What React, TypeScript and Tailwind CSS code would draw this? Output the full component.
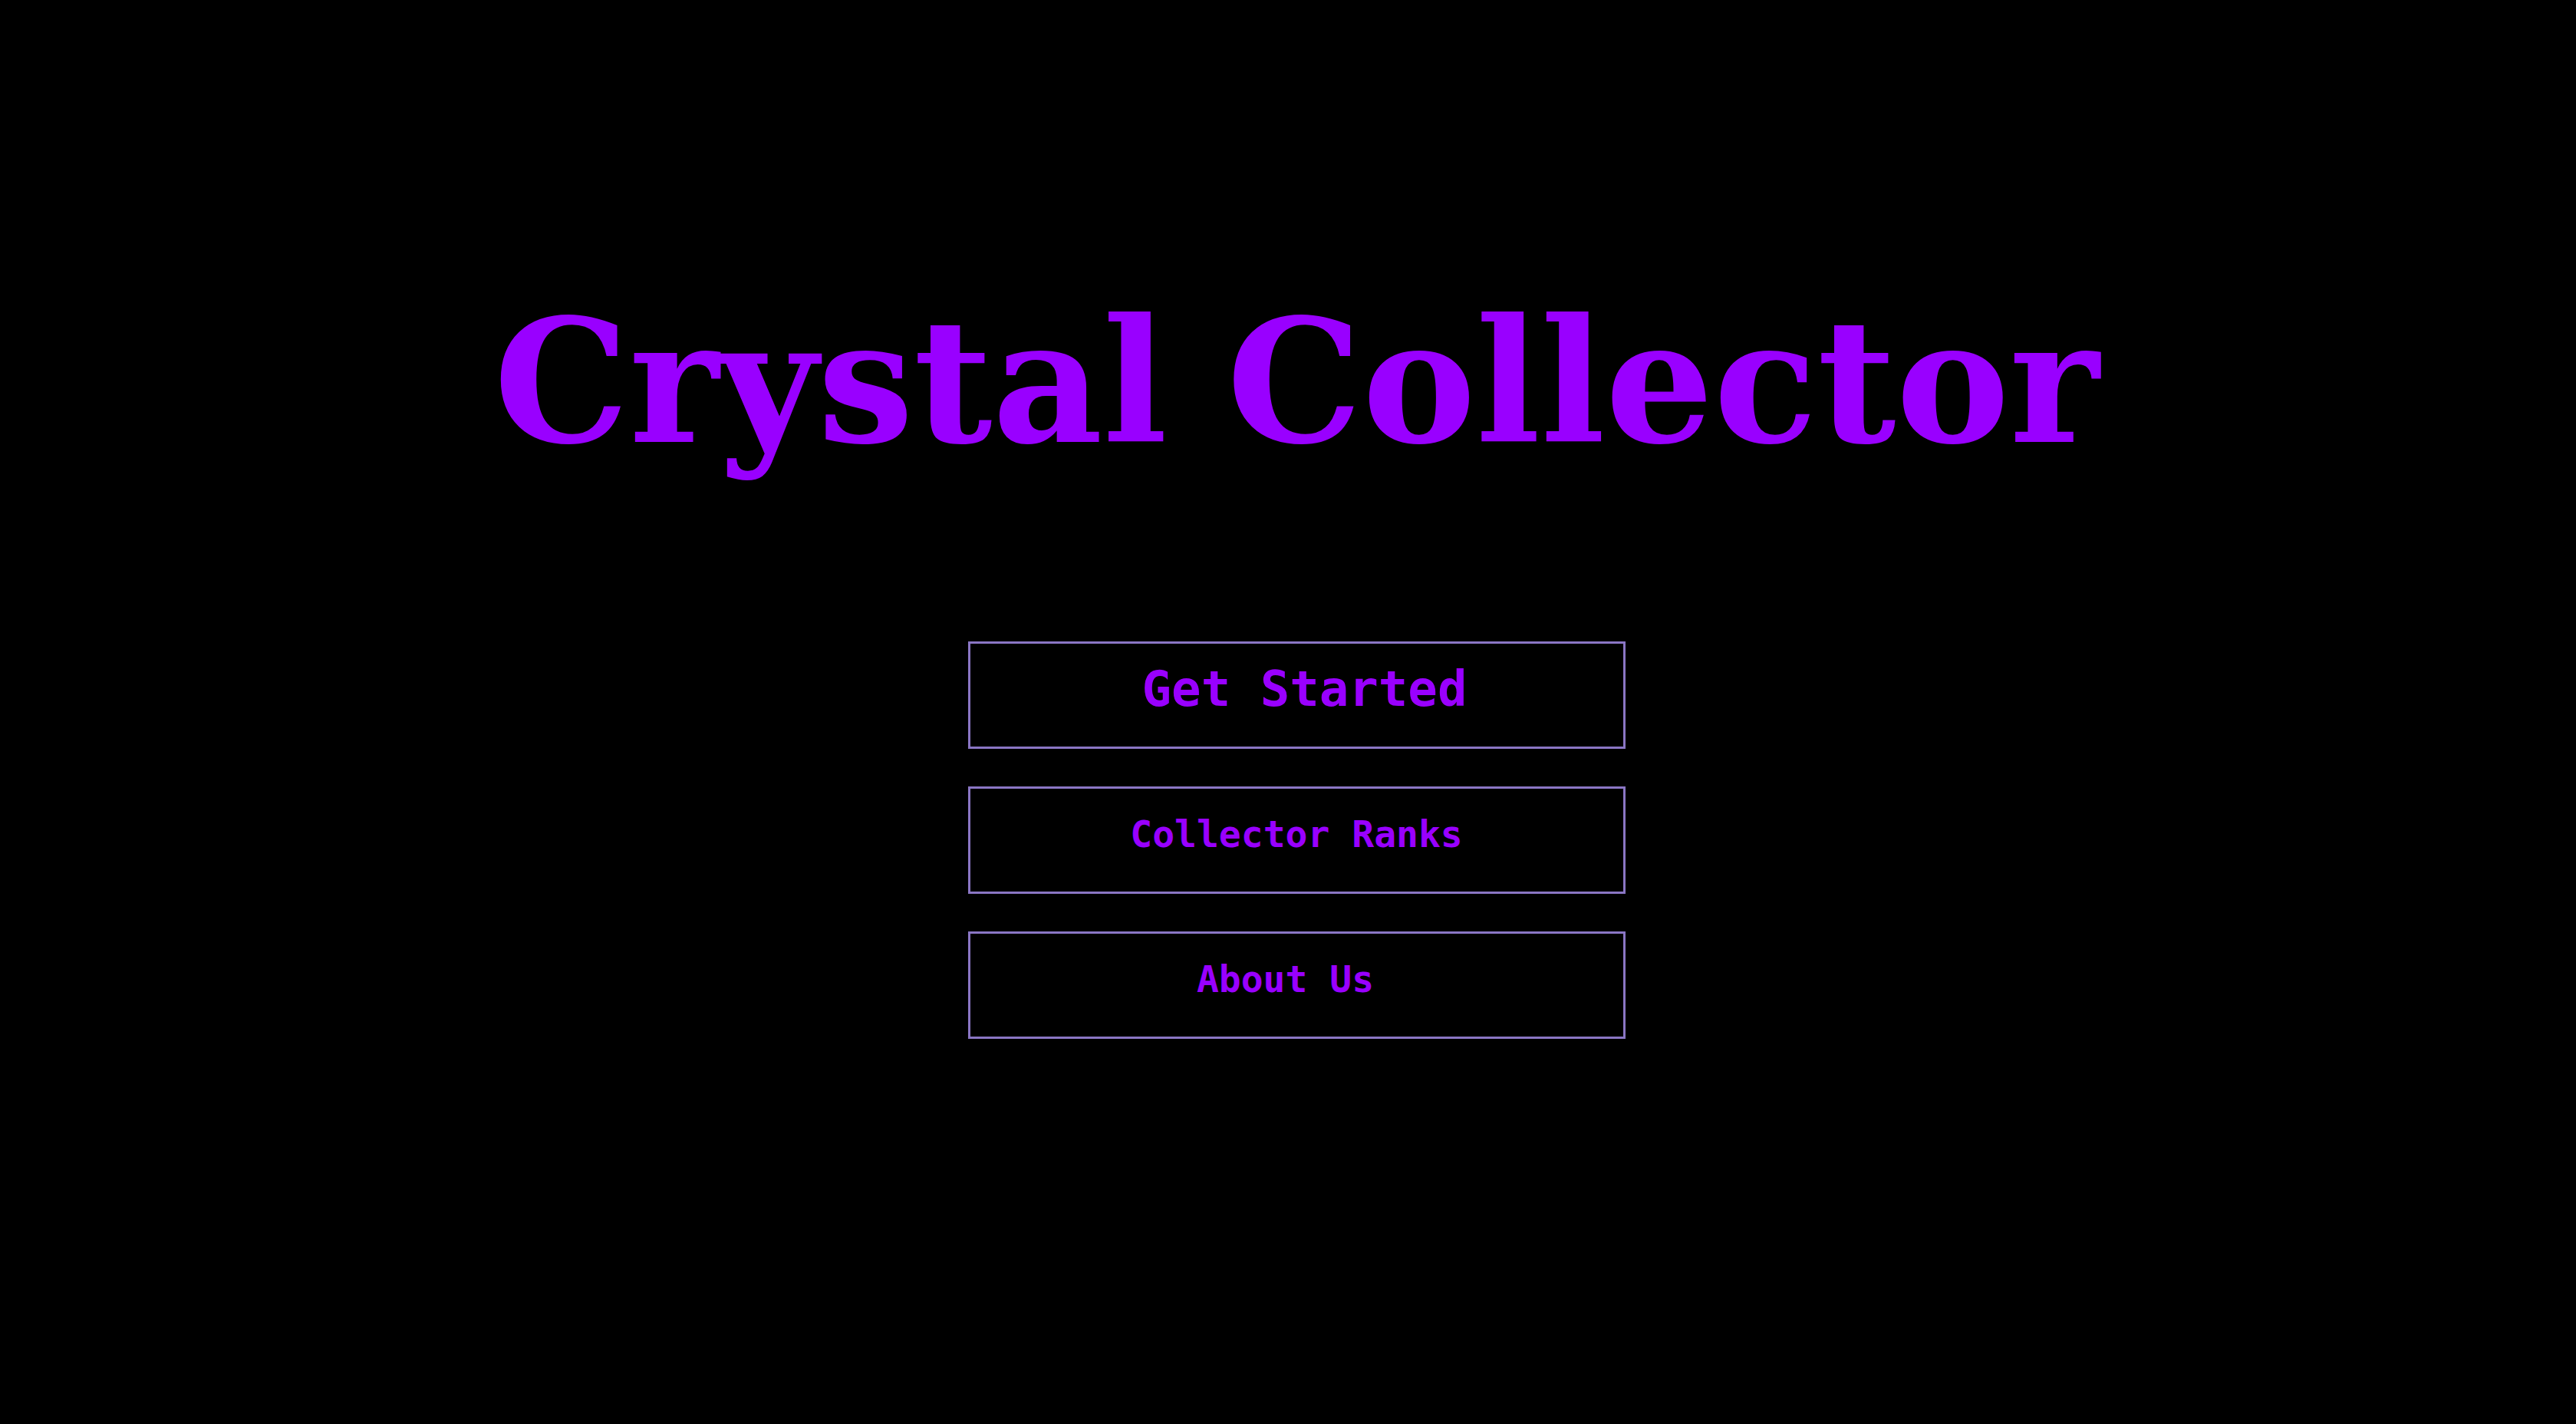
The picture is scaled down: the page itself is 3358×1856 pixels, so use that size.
import React from 'react';

const menuItems = [
  { label: 'Get Started', size: 'text-[64px] pl-[21px]' },
  { label: 'Collector Ranks', size: 'text-[48px]' },
  { label: 'About Us', size: 'text-[48px] pr-[29px]' },
];

const App: React.FC = () => {
  return (
    <div className="min-h-screen w-full bg-black flex flex-col items-center pl-[22px]">
      <h1
        className="mt-[368px] text-[222px] leading-[260px] font-bold text-[#9900ff] tracking-normal"
        style={{ fontFamily: '"DejaVu Serif", serif' }}
      >
        Crystal Collector
      </h1>

      <div className="mt-[208px] flex flex-col gap-[49px]">
        {menuItems.map((item) => (
          <button
            key={item.label}
            className={`w-[857px] h-[140px] pb-[16px] bg-black border-[3px] border-[#8a76c4] text-[#9900ff] font-semibold flex items-center justify-center ${item.size}`}
            style={{ fontFamily: '"DejaVu Sans Mono", monospace' }}
          >
            {item.label}
          </button>
        ))}
      </div>
    </div>
  );
};

export default App;
